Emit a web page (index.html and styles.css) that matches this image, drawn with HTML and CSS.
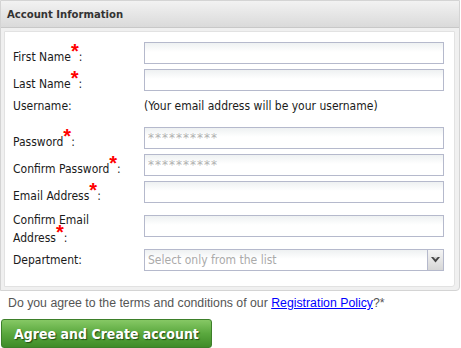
FILE: index.html
```html
<!DOCTYPE html>
<html lang="en">
<head>
  <meta charset="UTF-8">
  <title>Account Information</title>
  <link rel="stylesheet" href="styles.css">
</head>
<body>
  <!-- Painel da conta -->
  <div class="panel">
    <div class="panel-head">Account Information</div>
    <div class="panel-body">
      <div class="form">
        <div class="row">
          <label class="label">First Name<span class="req">*</span>:</label>
          <input class="field" type="text">
        </div>
        <div class="row">
          <label class="label">Last Name<span class="req">*</span>:</label>
          <input class="field" type="text">
        </div>
        <div class="row row-note">
          <span class="label label-plain">Username:</span>
          <span class="note">(Your email address will be your username)</span>
        </div>
        <div class="row">
          <label class="label">Password<span class="req">*</span>:</label>
          <input class="field field-pass" type="password" placeholder="**********">
        </div>
        <div class="row">
          <label class="label">Confirm Password<span class="req">*</span>:</label>
          <input class="field field-pass" type="password" placeholder="**********">
        </div>
        <div class="row">
          <label class="label">Email Address<span class="req">*</span>:</label>
          <input class="field" type="text">
        </div>
        <div class="row row-tall">
          <label class="label label-wrap">Confirm Email Address<span class="req">*</span>:</label>
          <input class="field" type="text">
        </div>
        <div class="row">
          <label class="label label-plain">Department:</label>
          <div class="select">
            <span class="select-text">Select only from the list</span>
            <span class="select-arrow">
              <svg width="9" height="6" viewBox="0 0 9 6"><path d="M0 0h9L4.5 5.5z" fill="#444"/><path d="M2.2 0h4.6L4.5 2.6z" fill="#d0d0d0"/></svg>
            </span>
          </div>
        </div>
      </div>
    </div>
  </div>

  <p class="terms">Do you agree to the terms and conditions of our <a href="#">Registration Policy</a>?*</p>

  <button class="btn" type="button">Agree and Create account</button>
</body>
</html>
```

FILE: styles.css
```css
* {
  margin: 0;
  padding: 0;
  box-sizing: border-box;
}

body {
  font-family: 'DejaVu Sans Condensed', 'DejaVu Sans', sans-serif;
  font-size: 12px;
  color: #1a1a1a;
  background: #fff;
}

.panel {
  width: 460px;
  border: 1px solid #d4d4d4;
  border-radius: 0 0 4px 0;
  background: #f0f0f0;
}

.panel-head {
  height: 27px;
  padding: 7px 0 0 6px;
  font-weight: bold;
  font-size: 11.2px;
  color: #333;
  background: linear-gradient(#f2f2f2, #dadada);
  border-bottom: 1px solid #c8c8c8;
}

.panel-body {
  padding: 3px 4px 3px 3px;
}

.form {
  background: #fff;
  border: 1px solid #e2e2e2;
  border-radius: 0 0 3px 0;
  padding: 10px 0 15px 8px;
}

.row {
  display: flex;
  align-items: center;
  min-height: 22px;
  margin-bottom: 5px;
}

.row:last-child {
  margin-bottom: 0;
}

.row-note {
  height: 26px;
  align-items: flex-start;
  padding-top: 3px;
}

.row-tall {
  height: 36px;
}

.label {
  width: 131px;
  flex: none;
  line-height: 14px;
  padding-top: 8px;
}

.label-plain {
  padding-top: 0;
}

.label-wrap {
  width: 110px;
  margin-right: 21px;
  line-height: 18px;
  padding-top: 3px;
  align-self: flex-start;
}

.req {
  color: #f00;
  font-weight: bold;
  font-size: 20px;
  font-family: 'Liberation Sans', sans-serif;
  vertical-align: 3px;
  line-height: 0;
}

.note {
  color: #1a1a1a;
}

.field {
  width: 300px;
  height: 22px;
  border: 1px solid #b5b9cc;
  background: linear-gradient(#eef1f2, #fff 9px);
  font-family: inherit;
  font-size: 12px;
  padding: 0 3px;
  outline: none;
}

.field-pass::placeholder {
  font-family: 'DejaVu Sans', sans-serif;
  letter-spacing: 1px;
  color: #b0b0b0;
}

.select {
  width: 300px;
  height: 22px;
  display: flex;
  align-items: center;
  border: 1px solid #b5b9cc;
  background: linear-gradient(#eef1f2, #fff 9px);
}

.select-text {
  flex: 1;
  padding-left: 3px;
  color: #aaa;
  font-size: 12px;
}

.select-arrow {
  width: 16px;
  height: 20px;
  display: flex;
  align-items: center;
  justify-content: center;
  border-left: 1px solid #b5b9cc;
  background: linear-gradient(#f4f4f4, #d6d6d6);
}

.terms {
  margin: 5px 0 0 8px;
  font-family: 'Liberation Sans', sans-serif;
  font-size: 12.3px;
  color: #555;
}

.terms a {
  color: #00f;
}

.btn {
  display: block;
  margin: 9px 0 0 1px;
  width: 211px;
  height: 29px;
  border: 1px solid #3d7f2a;
  border-radius: 3px;
  background: linear-gradient(#86c865, #5aa83e 50%, #3f8c28);
  color: #fff;
  font-family: 'DejaVu Sans Condensed', 'DejaVu Sans', sans-serif;
  font-weight: bold;
  font-size: 14px;
  text-shadow: 1px 1px 1px #1f4a12;
  cursor: pointer;
}
```
